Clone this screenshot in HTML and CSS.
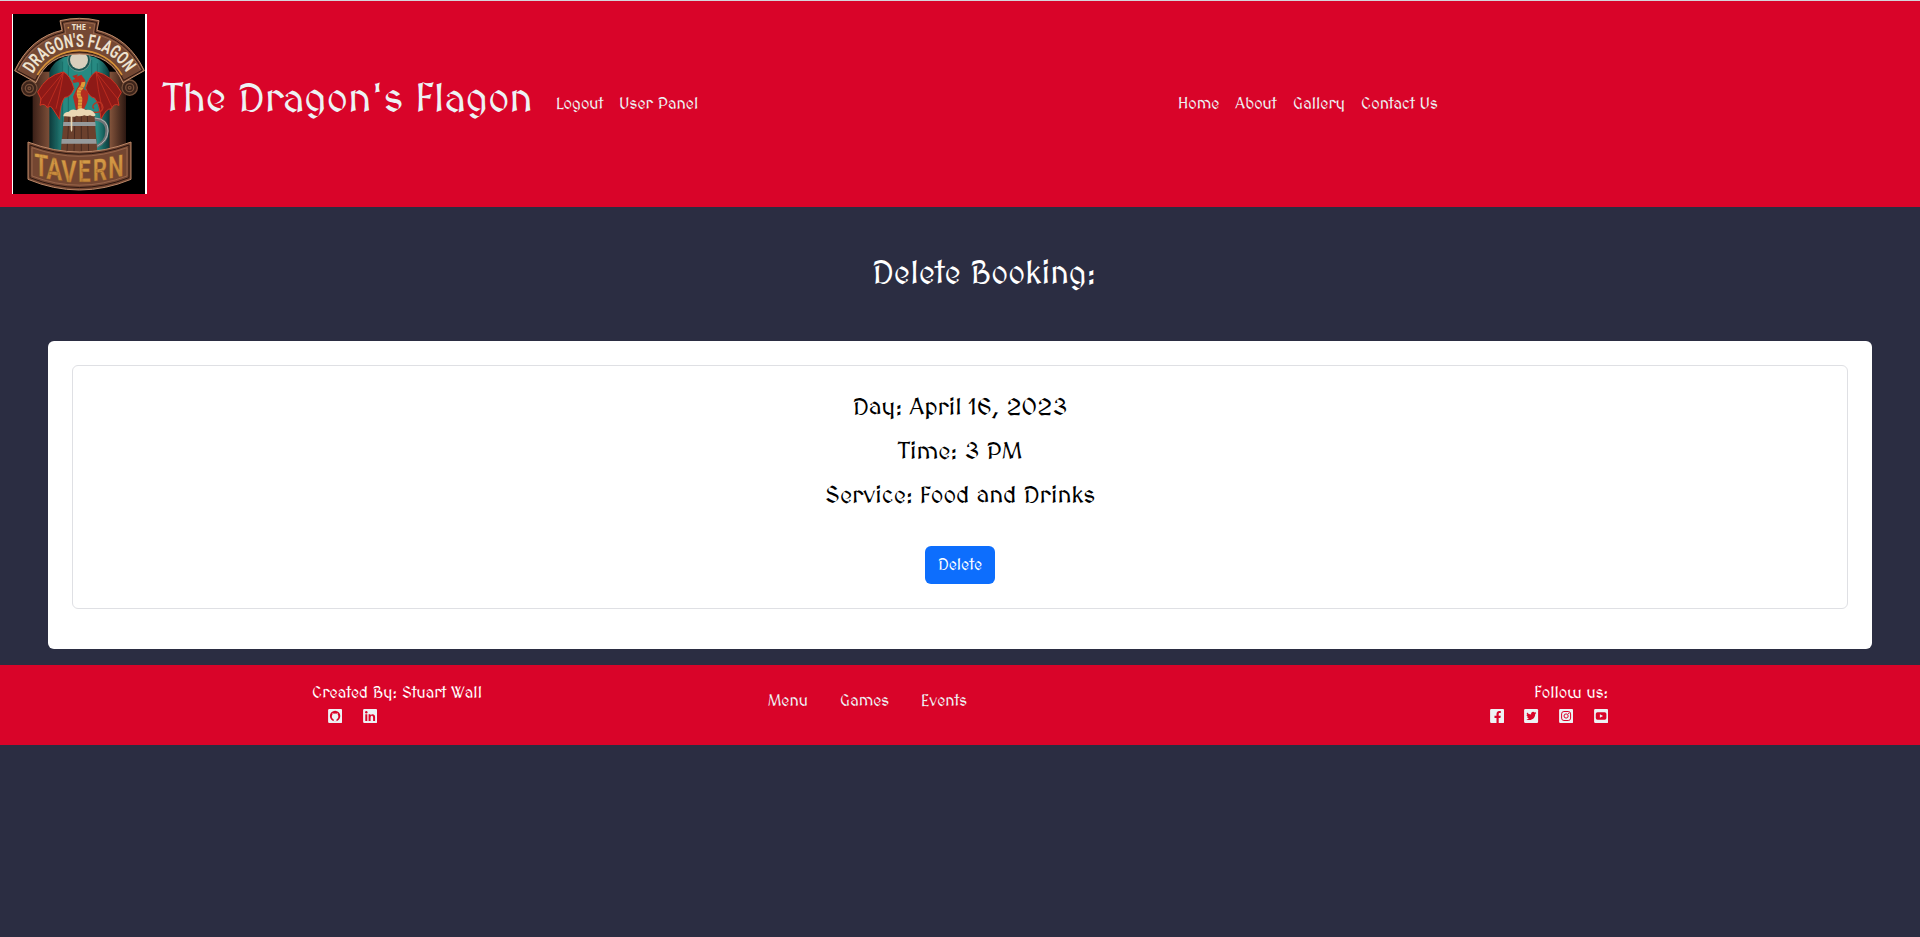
FILE: index.html
```html
<!DOCTYPE html>
<html lang="en">
<head>
<meta charset="utf-8">
<title>The Dragon's Flagon</title>
<link rel="stylesheet" href="styles.css">
</head>
<body>
<header class="header">
  <a class="logo" href="#" aria-label="The Dragon's Flagon">
    <svg viewBox="36 42 405 540" width="135" height="180">
      <defs>
        <linearGradient id="wood" x1="0" x2="1"><stop offset="0" stop-color="#3b2018"/><stop offset=".3" stop-color="#a86e4e"/><stop offset=".5" stop-color="#5d3828"/><stop offset=".75" stop-color="#a86e4e"/><stop offset="1" stop-color="#2c1711"/></linearGradient>
        <linearGradient id="teal" x1="0" x2="1"><stop offset="0" stop-color="#0d3a3b"/><stop offset=".25" stop-color="#278a82"/><stop offset=".8" stop-color="#278a82"/><stop offset="1" stop-color="#0d3a3b"/></linearGradient>
        <linearGradient id="gold" x1="0" y1="0" x2="0" y2="1"><stop offset="0" stop-color="#dba24c"/><stop offset="1" stop-color="#bd7d33"/></linearGradient>
        <path id="arc" d="M99 222A162 162 0 0 1 381 222"/>
      </defs>
      <path fill="#fff" d="M36 42h405v540H36z"/>
      <path fill="#000" d="M39 42h396v540H39z"/>
      <path fill="url(#wood)" d="M98 215h52v240H98zM328 215h50v240h-50z"/>
      <path fill="url(#teal)" d="M148 455V215q20-50 90-50t90 50v240z"/>
      <path stroke="#14605d" stroke-width="2" d="M170 200v250M187 185v265M205 175v160M275 180v60M292 190v70M311 205v245"/>
      <circle cx="237" cy="180" r="34" fill="#1b5552" stroke="#88aaa0" stroke-width="2"/>
      <circle cx="237" cy="180" r="27" fill="#d9cfbd"/>
      <g fill="#3c241b" stroke="#77503a" stroke-width="4">
        <circle cx="88" cy="265" r="23"/><circle cx="88" cy="265" r="12"/><circle cx="88" cy="265" r="4"/>
        <circle cx="389" cy="263" r="23"/><circle cx="389" cy="263" r="12"/><circle cx="389" cy="263" r="4"/>
      </g>
      <path fill="#754833" stroke="#c08d6c" stroke-width="3" d="M44 212Q91 112 186 91L180 62Q238 48 297 62L291 91Q386 113 433 212L369 248Q332 162 238 162T108 248z"/>
      <path fill="none" stroke="#2d1711" stroke-width="3" d="M50 211Q96 119 192 96L187 67Q238 55 290 67L285 96Q380 119 427 210L371 241Q332 156 238 156T106 241z"/>
      <path fill="none" stroke="#a87356" stroke-width="2" d="M55 210Q100 122 197 101L193 72Q238 61 284 72L280 101Q378 123 421 209"/>
      <path fill="none" stroke="#d79238" stroke-width="5" d="M112 225A146 146 0 0 1 366 225"/>
      <text class="logo-small" x="215" y="89" textLength="43" lengthAdjust="spacingAndGlyphs">THE</text>
      <circle cx="205" cy="83" r="2.5" fill="#e1a04c"/><circle cx="270" cy="83" r="2.5" fill="#e1a04c"/>
      <text class="logo-name" textLength="338" lengthAdjust="spacingAndGlyphs"><textPath href="#arc">DRAGON'S FLAGON</textPath></text>
      <g fill="#8e1a17" stroke="#d13422" stroke-width="3">
        <path d="M222 266Q211 225 190 216Q140 226 113 276L123 297L120 316Q134 308 142 323Q153 314 160 329L179 358Q180 310 194 292Q210 293 222 266z"/>
        <path d="M257 264Q267 229 288 215Q337 226 364 277L353 297L357 316Q342 308 333 327Q320 323 303 357Q299 312 284 294Q266 291 257 264z"/>
        <path fill="none" stroke-width="2" d="M190 217L142 322M190 217L121 300M190 217Q184 260 168 326M288 216L336 322M288 216L356 300M288 216Q293 265 306 326"/>
      </g>
      <path fill="none" stroke="#ba3423" stroke-width="4" d="M243 326Q305 350 309 322Q306 302 289 308Q272 317 282 326"/>
      <path fill="#b62b20" d="M217 228L234 223L230 230L244 224L255 239Q260 252 248 264L263 276Q270 296 251 329H228L219 290L230 266Q242 253 235 246L221 249L217 240L226 237z"/>
      <path fill="none" stroke="#e29a38" stroke-width="12" d="M250 246Q251 257 239 269Q232 282 241 296L239 327"/>
      <path fill="none" stroke="#9a4b23" stroke-width="1.5" d="M240 260l13 4M234 269l14 4M232 279h16M233 288h16M234 297h15M234 307h14M233 316h14"/>
      <path fill="none" stroke="#6e7375" stroke-width="10" d="M282 357Q322 359 321 393Q321 426 287 441"/>
      <path fill="none" stroke="#aeb3b3" stroke-width="3" d="M284 354Q325 357 324 393Q323 423 292 438"/>
      <path fill="#6b402d" d="M193 344h90l9 113H182z"/>
      <path stroke="#38201a" stroke-width="2" d="M207 347l-6 108M225 347l-3 108M244 347v108M262 347l4 108"/>
      <path fill="#969a9c" d="M190 366h96l1 12h-98zM185 417h103l2 14H184z"/>
      <path fill="#ead7b4" d="M190 349Q189 337 206 335Q216 325 229 331Q244 319 257 330Q277 326 287 345Q283 352 270 346Q262 350 253 346Q241 351 230 347Q221 352 217 350V390Q215 401 212 390V350Q200 348 190 349z"/>
      <path fill="#744631" stroke="#bc8868" stroke-width="3" d="M84 426Q238 486 393 426V538Q238 602 84 538z"/>
      <path fill="none" stroke="#2d1711" stroke-width="3" d="M90 435Q238 490 387 435V533Q238 592 90 533z"/>
      <path fill="none" stroke="#aa7658" stroke-width="2" d="M96 443Q238 495 381 443V528Q238 583 96 528z"/>
      <g class="logo-tavern">
        <text transform="translate(103 525) skewY(10)" textLength="42" lengthAdjust="spacingAndGlyphs">T</text>
        <text transform="translate(139 536) skewY(7)" textLength="48" lengthAdjust="spacingAndGlyphs">A</text>
        <text transform="translate(184 545) skewY(3)" textLength="46" lengthAdjust="spacingAndGlyphs">V</text>
        <text transform="translate(234 547)" textLength="38" lengthAdjust="spacingAndGlyphs">E</text>
        <text transform="translate(278 544) skewY(-6)" textLength="43" lengthAdjust="spacingAndGlyphs">R</text>
        <text transform="translate(325 536) skewY(-10)" textLength="46" lengthAdjust="spacingAndGlyphs">N</text>
      </g>
    </svg>
  </a>
  <h1 class="brand">The Dragon's Flagon</h1>
  <nav class="nav account">
    <a class="w-logout" href="#">Logout</a><a class="w-panel" href="#">User Panel</a>
  </nav>
  <nav class="nav site">
    <a class="w-home" href="#">Home</a><a class="w-about" href="#">About</a><a class="w-gallery" href="#">Gallery</a><a class="w-contact" href="#">Contact Us</a>
  </nav>
</header>
<main>
  <h2 class="heading">Delete Booking:</h2>
  <section class="panel">
    <div class="card">
      <p class="day">Day: April 16, 2023</p>
      <p class="time">Time: 3 PM</p>
      <p class="service">Service: Food and Drinks</p>
      <button class="button">Delete</button>
    </div>
  </section>
</main>
<footer class="footer">
  <div class="created">
    <p>Created By: Stuart Wall</p>
    <div class="icons">
      <svg viewBox="0 0 14 14"><rect width="14" height="14" rx="1.2"/><circle class="cut" cx="7" cy="7" r="5.2"/><path d="M5.6 12.4v-2C3.6 9.6 3.2 7 4.4 5.6L4.3 4l1.5.7q1.2-.3 2.4 0L9.7 4l-.1 1.6C10.8 7 10.4 9.6 8.4 10.4v2z"/></svg>
      <svg viewBox="0 0 14 14"><rect width="14" height="14" rx="1.2"/><path class="cut" d="M2.2 5.3h2V12h-2zM5.5 5.3h1.9v1C8.8 4.5 12 4.9 12 8v4h-2V8.5C10 6.2 7.5 6.3 7.5 8.5V12h-2z"/><circle class="cut" cx="3.2" cy="3.2" r="1.2"/></svg>
    </div>
  </div>
  <nav class="links"><a class="w-menu" href="#">Menu</a><a class="w-games" href="#">Games</a><a class="w-events" href="#">Events</a></nav>
  <div class="follow">
    <p>Follow us:</p>
    <div class="icons">
      <svg viewBox="0 0 14 14"><rect width="14" height="14" rx="1.2"/><path class="cut" d="M6.4 14V9H4.4V6.8h2V5.3C6.4 3 7.8 2 9 2h1.7v2H9.6C8.8 4 8.6 4.5 8.6 5.2v1.6h2.1L10.3 9H8.6v5z"/></svg>
      <svg viewBox="0 0 14 14"><rect width="14" height="14" rx="1.2"/><path class="cut" d="M3 3.5q1.6 2 4 2.1C6.6 3 9.2 2 10.5 3.5L12 3l-.7 1.3.9-.1-1.1 1.1C11.1 10 6.4 12.5 2.2 10.2q1.6.1 2.7-.9-1.5-.1-1.9-1.4h.9Q2.4 7.2 2.4 5.7l.9.2Q2.1 4.9 3 3.5z"/></svg>
      <svg viewBox="0 0 14 14"><rect width="14" height="14" rx="1.2"/><rect class="line thin" x="2.5" y="2.5" width="9" height="9" rx="2.4"/><circle class="line thin" cx="7" cy="7" r="2.1"/><circle class="cut" cx="9.6" cy="4.4" r=".6"/></svg>
      <svg viewBox="0 0 14 14"><rect width="14" height="14" rx="1.2"/><rect class="cut" x="1.7" y="3.2" width="10.6" height="7.6" rx="1.7"/><path d="M5.8 5.2L9 7 5.8 8.8z"/></svg>
    </div>
  </div>
</footer>
</body>
</html>
```
FILE: styles.css
```css
* { box-sizing: border-box; }
body { margin: 0; min-height: 937px; background: #2b2d42; font: 16px/24px MedievalSharp, Macondo, Lato, sans-serif; color: #edf2f4; border-top: 1px solid #d5d5da; }
h1, h2, p { margin: 0; font-weight: 400; white-space: nowrap; }
a { color: inherit; text-decoration: none; white-space: nowrap; }
.header { height: 206px; background: #d90429; display: flex; align-items: center; padding: 0 12px; }
.logo { display: block; width: 135px; height: 180px; }
.logo svg { display: block; }
.logo-small { font: 700 25px "Open Sans", sans-serif; fill: #efe2ce; }
.logo-name { font: 700 56px "Roboto", sans-serif; fill: #eee2cf; }
.logo-tavern { font: 700 92px "Roboto", sans-serif; fill: url(#gold); stroke: #835024; stroke-width: 1; }
.brand { width: 370px; margin-left: 16px; padding-bottom: 9px; font-size: 40px; line-height: 48px; }
.nav { display: flex; gap: 16px; }
.account { margin-left: 23px; }
.site { margin-left: 478px; }
.nav a { flex: none; }
.w-logout { width: 47px; }
.w-panel { width: 81px; }
.w-home { width: 41px; }
.w-about { width: 42px; }
.w-gallery { width: 52px; }
.w-contact { width: 77px; }
.heading { margin: 48px 0 0 48px; text-align: center; font-size: 32px; line-height: 38px; color: #fff; }
.panel { height: 308px; margin: 48px 48px 16px; padding: 24px; border-radius: 6px; background: #fff; }
.card { height: 244px; border: 1px solid #dfe0e4; border-radius: 6px; display: flex; flex-direction: column; align-items: center; padding-top: 27px; color: #000; }
.card p { font-size: 24px; line-height: 29px; margin-bottom: 15px; }
.button { width: 70px; height: 38px; margin-top: 21px; padding: 0; border: 0; border-radius: 6px; background: #0d6efd; color: #fff; font: inherit; }
.footer { height: 80px; background: #d90429; display: flex; padding: 0 312px; }
.created { width: 456px; padding-top: 16px; color: #fff; }
.created .icons { margin-left: 16px; }
.icons { display: flex; gap: 20.5px; margin-top: 4px; }
.icons svg { width: 14.2px; height: 14px; fill: #edf2f4; }
.icons .cut { fill: #d90429; }
.icons .line { fill: none; stroke: #d90429; stroke-width: 1.5; }
.icons .thin { stroke-width: 1; }
.links { display: flex; gap: 32px; padding-top: 24px; }
.w-menu { width: 40px; }
.w-games { width: 49px; }
.w-events { width: 46px; }
.follow { margin-left: auto; padding-top: 16px; display: flex; flex-direction: column; align-items: flex-end; color: #fff; }
```
